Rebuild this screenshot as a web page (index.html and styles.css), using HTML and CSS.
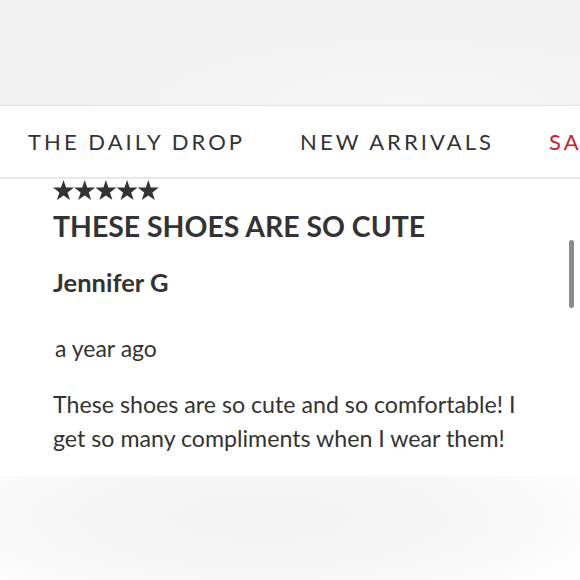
FILE: index.html
```html
<!DOCTYPE html>
<html lang="en">
<head>
    <meta charset="UTF-8">
    <meta name="viewport" content="width=device-width, initial-scale=1.0">
    <title>Reviews</title>
    <link rel="stylesheet" href="styles.css">
</head>
<body>
    <div class="top-bar"></div>

    <nav class="menu">
        <a href="#" class="menu-item">THE DAILY DROP</a>
        <a href="#" class="menu-item">NEW ARRIVALS</a>
        <a href="#" class="menu-item sale">SALE</a>
    </nav>

    <div class="review">
        <div class="stars">
            <svg viewBox="0 0 106 20" width="106" height="20">
                <defs>
                    <polygon id="star" points="10.5,0 13,7.4 21,7.6 14.6,12.4 17,20 10.5,15.4 4,20 6.4,12.4 0,7.6 8,7.4"/>
                </defs>
                <use href="#star" x="0" fill="#333"/>
                <use href="#star" x="21.2" fill="#333"/>
                <use href="#star" x="42.4" fill="#333"/>
                <use href="#star" x="63.6" fill="#333"/>
                <use href="#star" x="84.8" fill="#333"/>
            </svg>
        </div>
        <h2 class="review-title">THESE SHOES ARE SO CUTE</h2>
        <div class="review-author">Jennifer G</div>
        <div class="review-date">a year ago</div>
        <p class="review-text">These shoes are so cute and so comfortable! I get so many compliments when I wear them!</p>

        <div class="scroll-thumb"></div>
    </div>

    <div class="bottom-bar"></div>
</body>
</html>
```

FILE: styles.css
```css
body {
    margin: 0;
    font-family: Lato, 'Liberation Sans', sans-serif;
    color: #333;
    background: #fff;
    overflow: hidden;
}

.top-bar {
    height: 105px;
    background: radial-gradient(ellipse at 70% 100%, #f7f6f6 0%, #f1f1f1 70%);
    border-bottom: 1px solid #e2e2e2;
}

.menu {
    display: flex;
    align-items: center;
    gap: 55px;
    height: 71px;
    padding-left: 28px;
    border-bottom: 2px solid #e8e8e8;
    white-space: nowrap;
    overflow: hidden;
}

.menu-item {
    font-size: 22px;
    letter-spacing: 3.05px;
    color: #333;
    text-decoration: none;
}

.menu-item.sale {
    color: #d11a2a;
}

.review {
    position: relative;
    height: 296px;
    padding-left: 53px;
    padding-right: 50px;
    padding-top: 1px;
}

.stars {
    height: 20px;
}

.stars svg {
    display: block;
}

.review-title {
    margin: 8px 0 0;
    font-size: 28.4px;
    font-weight: bold;
    line-height: 36px;
}

.review-author {
    margin-top: 23px;
    font-size: 25.5px;
    font-weight: bold;
    line-height: 30px;
}

.review-date {
    margin-top: 36px;
    padding-left: 2px;
    font-size: 23px;
    line-height: 30px;
}

.review-text {
    margin: 24px 0 0;
    font-size: 23.2px;
    line-height: 34px;
}

.scroll-thumb {
    position: absolute;
    top: 61px;
    right: 6px;
    width: 5px;
    height: 68px;
    border-radius: 3px;
    background: #8a8a8a;
}

.bottom-bar {
    height: 105px;
    background: radial-gradient(ellipse 60% 90% at 45% 40%, #f3f3f3 0%, #f6f6f6 60%, #fdfdfd 100%);
}
```
